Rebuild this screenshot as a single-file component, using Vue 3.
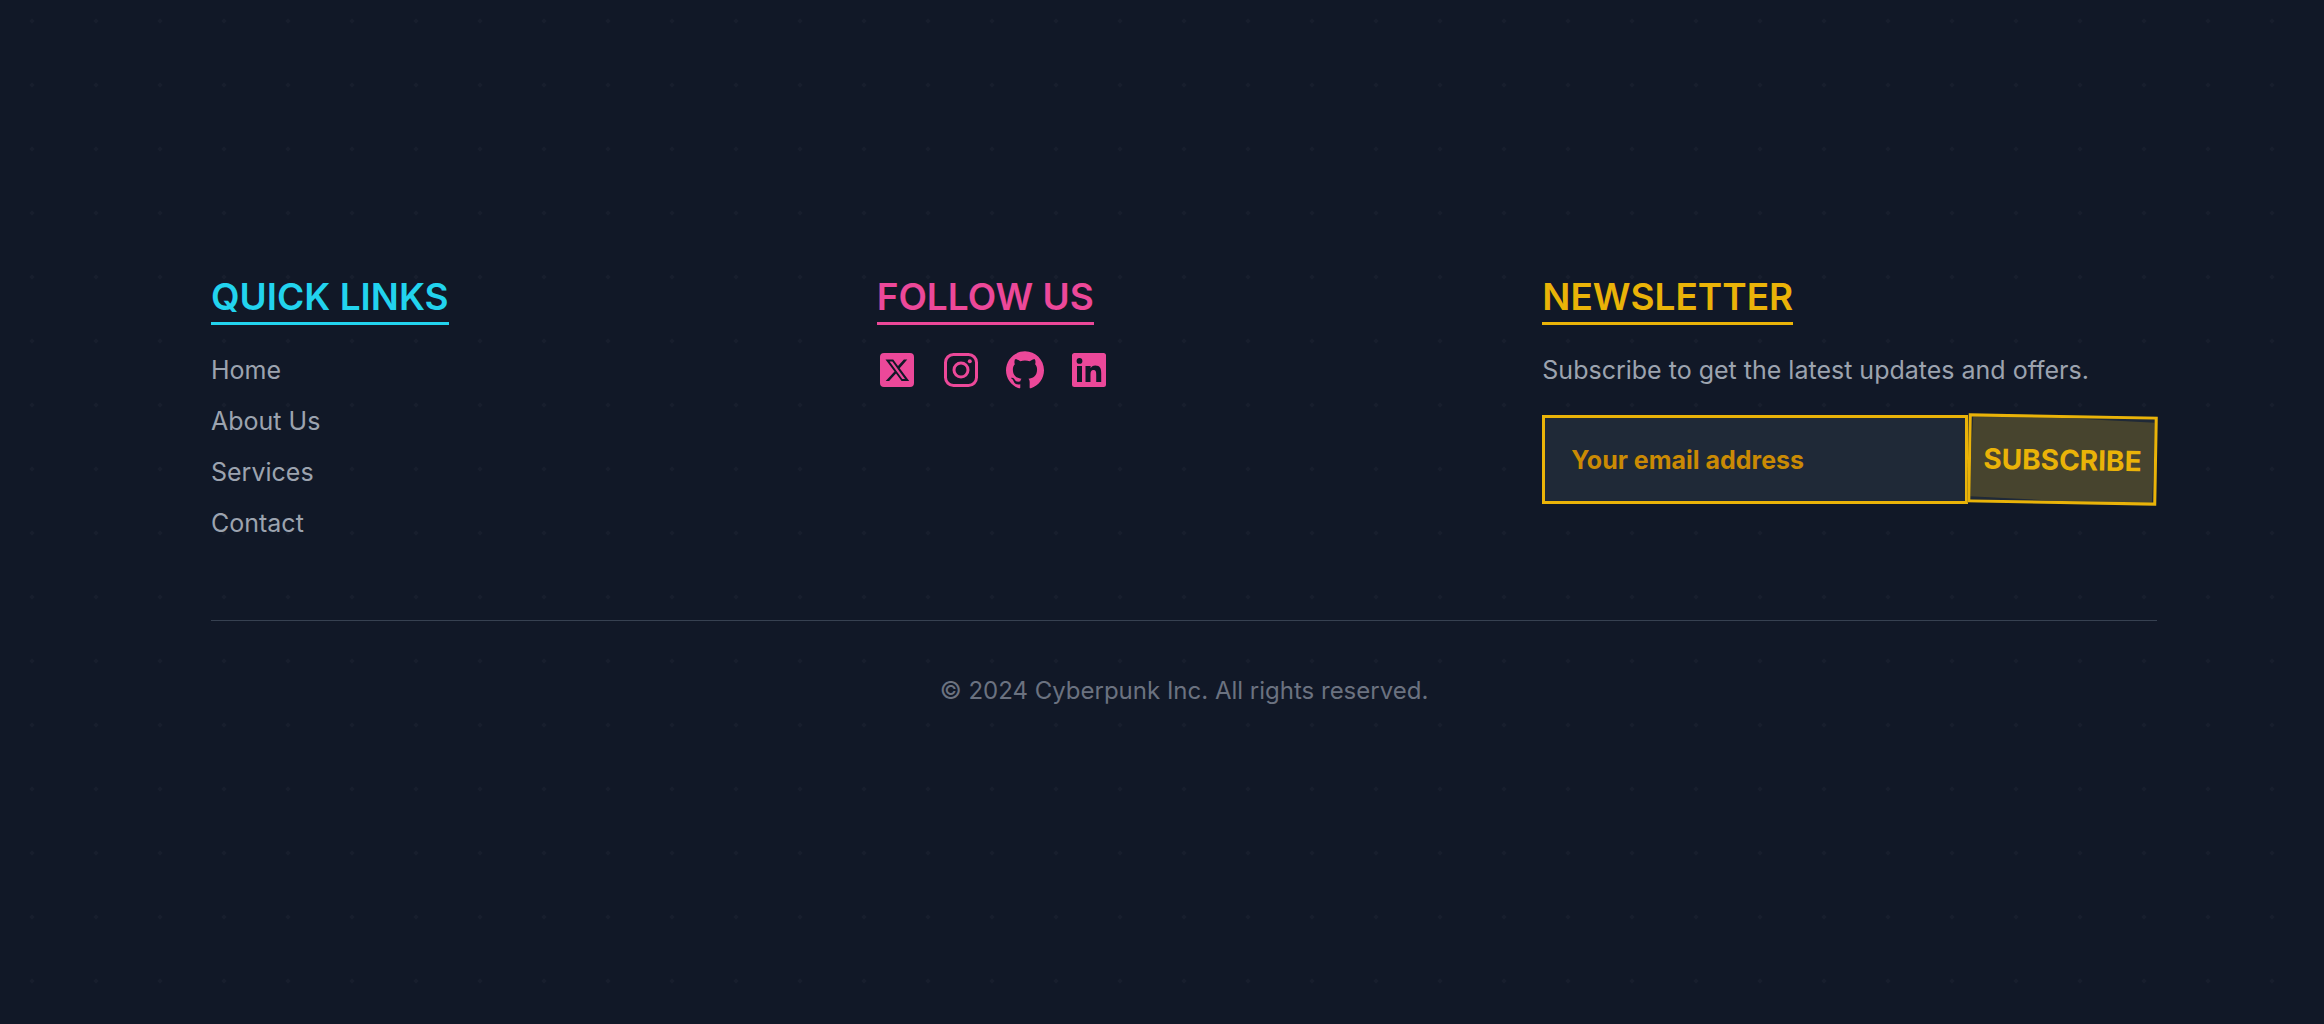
<script setup>
const links = ['Home', 'About Us', 'Services', 'Contact']
</script>

<template>
  <footer class="footer">
    <div class="columns">
      <nav aria-labelledby="links-title">
        <h2 id="links-title" class="title cyan">QUICK LINKS</h2>
        <ul class="links">
          <li v-for="link in links" :key="link"><a href="#">{{ link }}</a></li>
        </ul>
      </nav>

      <section>
        <h2 class="title pink">FOLLOW US</h2>
        <div class="socials">
          <a href="#" aria-label="X">
            <svg viewBox="0 0 40 40">
              <path fill-rule="evenodd" d="M7 3h26a4 4 0 0 1 4 4v26a4 4 0 0 1-4 4H7a4 4 0 0 1-4-4V7a4 4 0 0 1 4-4zM8.500 9.500l9 12L8.700 31h3.400l6.900-7.500 5.600 7.500h7.600l-9.500-12.700L30.300 9.500h-3.400l-5.900 6.600-4.800-6.600zM12.600 11.600h2.700l12.700 17.300h-2.700z" />
            </svg>
          </a>
          <a href="#" aria-label="Instagram">
            <svg viewBox="0 0 40 40">
              <rect x="4.500" y="4.500" width="31" height="31" rx="8" class="stroke" />
              <circle cx="20" cy="20" r="7" class="stroke" />
              <circle cx="28.800" cy="11.200" r="2" />
            </svg>
          </a>
          <a href="#" aria-label="GitHub">
            <svg viewBox="0 0 24 24">
              <path transform="translate(.6 .5) scale(.95)" d="M12 .297c-6.630 0-12 5.373-12 12 0 5.303 3.438 9.800 8.205 11.385.6.113.82-.258.82-.577 0-.285-.01-1.040-.015-2.040-3.338.724-4.042-1.610-4.042-1.610C4.422 18.070 3.633 17.700 3.633 17.700c-1.087-.744.084-.729.084-.729 1.205.084 1.838 1.236 1.838 1.236 1.070 1.835 2.809 1.305 3.495.998.108-.776.417-1.305.76-1.605-2.665-.3-5.466-1.332-5.466-5.930 0-1.310.465-2.380 1.235-3.220-.135-.303-.54-1.523.105-3.176 0 0 1.005-.322 3.300 1.230.96-.267 1.980-.399 3-.405 1.020.006 2.040.138 3 .405 2.280-1.552 3.285-1.230 3.285-1.230.645 1.653.24 2.873.12 3.176.765.840 1.230 1.910 1.230 3.220 0 4.610-2.805 5.625-5.475 5.920.42.360.81 1.096.81 2.220 0 1.606-.015 2.896-.015 3.286 0 .315.21.690.825.570C20.565 22.092 24 17.592 24 12.297c0-6.627-5.373-12-12-12" />
            </svg>
          </a>
          <a href="#" aria-label="LinkedIn">
            <svg viewBox="0 0 40 40">
              <path fill-rule="evenodd" d="M5.500 3h29A2.500 2.500 0 0 1 37 5.500v29a2.500 2.500 0 0 1-2.500 2.500h-29A2.500 2.500 0 0 1 3 34.500v-29A2.500 2.500 0 0 1 5.500 3zM8 16v16h5V16zM10.500 8a2.900 2.900 0 1 0 0 5.800 2.900 2.900 0 0 0 0-5.800zM16.500 16v16h5v-8c0-2.200.6-4 3-4s2.700 2 2.700 4.200V32h5v-8.800c0-4.300-.9-7.600-5.900-7.600-2.400 0-4 1.300-4.700 2.600V16z" />
            </svg>
          </a>
        </div>
      </section>

      <section>
        <h2 class="title yellow">NEWSLETTER</h2>
        <p class="note">Subscribe to get the latest updates and offers.</p>
        <form class="form" @submit.prevent>
          <input type="email" aria-label="Your email address" placeholder="Your email address" />
          <button type="submit"><span>SUBSCRIBE</span></button>
        </form>
      </section>
    </div>
    <p class="copyright">© 2024 Cyberpunk Inc. All rights reserved.</p>
  </footer>
</template>

<style>
body {
  margin: 0;
  background: #111827;
}
</style>

<style scoped>
.footer {
  box-sizing: border-box;
  min-height: 100vh;
  padding: 273px 167px 0 211px;
  background-color: #111827;
  background-image: url("data:image/svg+xml,%3Csvg xmlns='http://www.w3.org/2000/svg' width='64' height='64'%3E%3Cpath d='M32 18.500l2.500 2.500-2.500 2.500-2.500-2.500z' fill='%23181e2d'/%3E%3C/svg%3E");
  color: #9ca3af;
  font-family: Inter, "Liberation Sans", sans-serif;
  font-size: 25px;
  line-height: 36px;
}
.columns {
  display: grid;
  grid-template-columns: repeat(3, minmax(0, 1fr));
  gap: 51px;
  padding-bottom: 79px;
  border-bottom: 1px solid #374151;
}
.title {
  width: fit-content;
  margin: 0 0 27px;
  padding-bottom: 1px;
  border-bottom: 3px solid;
  font-size: 37px;
  font-weight: 600;
  line-height: 48px;
}
.cyan { color: #22d3ee; }
.pink { color: #ec4899; }
.yellow { color: #eab308; }
.links {
  display: flex;
  flex-direction: column;
  gap: 15px;
  margin: 0;
  padding: 0;
  list-style: none;
}
a {
  color: inherit;
  text-decoration: none;
}
.socials {
  display: flex;
  gap: 24px;
  margin-top: -2px;
  color: #ec4899;
}
.socials a, .socials svg {
  display: block;
  width: 40px;
  height: 40px;
}
svg { fill: currentColor; }
.stroke {
  fill: none;
  stroke: currentColor;
  stroke-width: 3;
}
.note { margin: 0 0 27px; }
.form { display: flex; }
input, button {
  box-sizing: border-box;
  height: 89px;
  border: 3px solid #eab308;
  border-radius: 0;
  background: #1f2937;
  color: #eab308;
  font-family: inherit;
}
input {
  flex: 1;
  min-width: 0;
  padding: 0 26px;
  font-size: 25px;
  font-weight: 700;
}
input::placeholder {
  color: #ca8a04;
  opacity: 1;
}
button {
  position: relative;
  flex: 0 0 189px;
  padding: 0;
  overflow: hidden;
  font-size: 28px;
  font-weight: 700;
  transform: rotate(1deg);
}
button::before {
  content: "";
  position: absolute;
  inset: 0;
  background: rgba(234, 179, 8, 0.2);
  transform: rotate(2deg);
}
button span { position: relative; }
.copyright {
  margin: 52px 0 0;
  color: #6b7280;
  font-size: 24px;
  text-align: center;
}
</style>
